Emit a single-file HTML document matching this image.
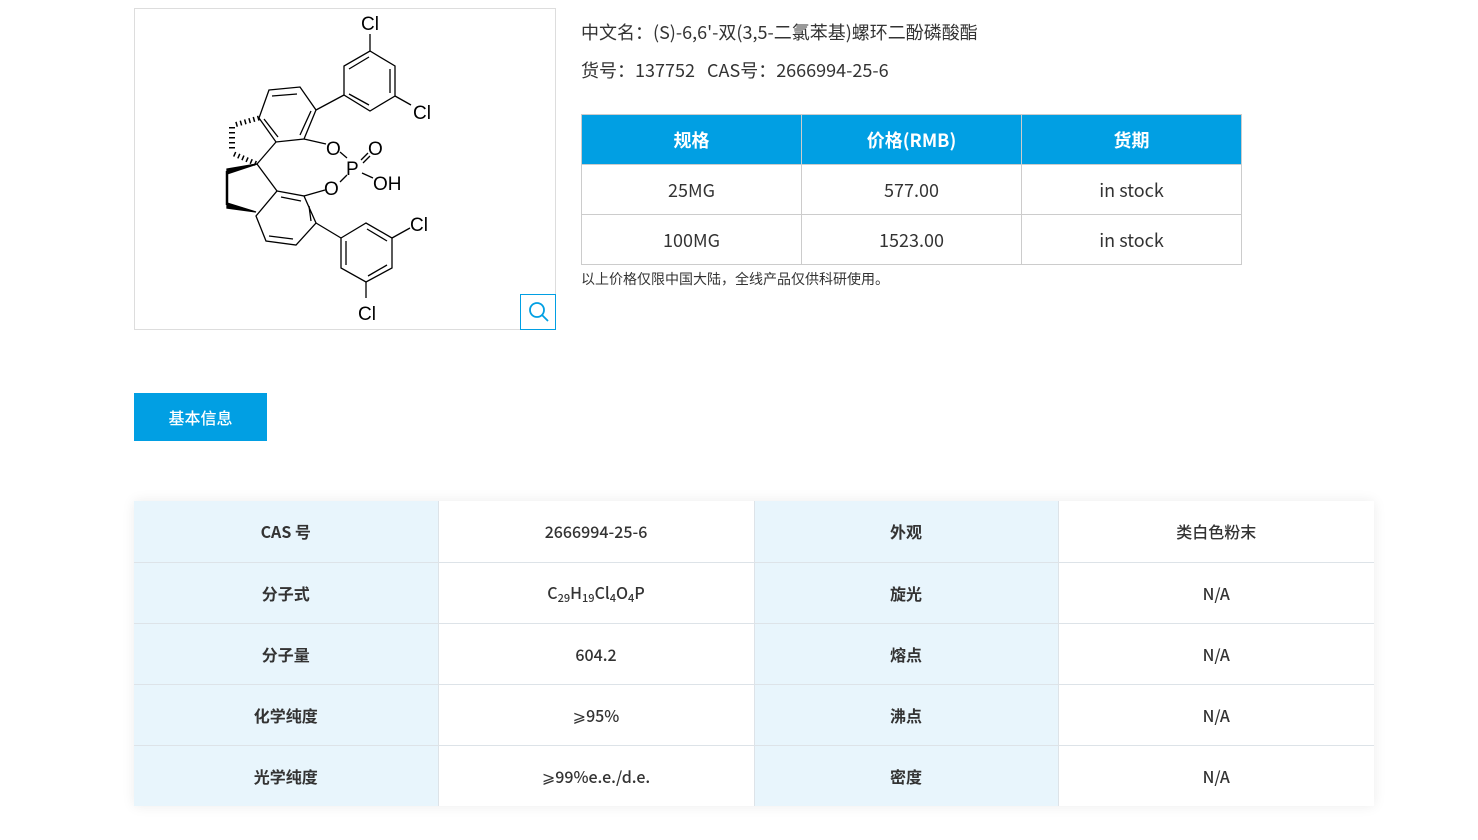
<!DOCTYPE html>
<html><head><meta charset="utf-8"><style>
*{margin:0;padding:0;box-sizing:border-box}
body{width:1478px;height:840px;background:#fff;font-family:"Noto Sans CJK SC","Liberation Sans",sans-serif;color:#333;position:relative;overflow:hidden}
.img{position:absolute;left:134px;top:8px;width:422px;height:322px;border:1px solid #ddd;overflow:hidden}
.zoom{position:absolute;left:520px;top:294px;width:36px;height:36px;border:1px solid #019fe3;background:#fff}
.t1{position:absolute;left:581px;top:19px;font-size:18px;color:#333}
.t2{position:absolute;left:581px;top:57px;font-size:18px;color:#333}
table.p{position:absolute;left:581px;top:114px;border-collapse:collapse;width:661px}
table.p td{border:1px solid #ccc;text-align:center;height:50px;font-size:18px;width:220px}
table.p tr.h td{background:#019fe3;color:#fff;font-weight:bold;border-color:#ccc}
.note{position:absolute;left:581px;top:269px;font-size:14px;color:#333}
.btn{position:absolute;left:134px;top:393px;width:133px;height:48px;background:#019fe3;color:#fff;font-size:16px;font-weight:500;line-height:48px;text-align:center}
table.b{position:absolute;left:134px;top:501px;border-collapse:collapse;box-shadow:0 0 12px rgba(0,0,0,.08)}
table.b td{height:61px;text-align:center;font-size:16px;font-weight:500;border-bottom:1px solid #dde3e8;border-right:1px solid #dde3e8;color:#333}
table.b tr:last-child td{border-bottom:none;height:61px}
table.b td.k{background:#e8f5fc;font-weight:bold}
sub{font-size:11px;vertical-align:-3px}
</style></head><body>
<div class="img">
<svg width="422" height="322" viewBox="134 8 422 322" style="position:absolute;left:-1px;top:-1px" fill="none" stroke="#000" stroke-width="1.3">
<polygon points="269,90 300,87 316,110 304,139 276,142 259,118"/>
<line x1="272" y1="96" x2="297" y2="94"/><line x1="300" y1="135" x2="311" y2="111"/><line x1="264" y1="119" x2="278" y2="137"/>
<line x1="316" y1="110" x2="344" y2="95"/>
<polygon points="344,95 344,66 370,51 395,66 395,96 370,111"/>
<line x1="349" y1="69" x2="369" y2="57"/><line x1="390" y1="69" x2="390" y2="93"/><line x1="349" y1="94" x2="369" y2="105"/>
<line x1="370" y1="51" x2="370" y2="34"/><line x1="395" y1="96" x2="411" y2="105"/>
<line x1="304" y1="139" x2="326" y2="144"/><line x1="340" y1="152" x2="347" y2="158"/>
<line x1="361" y1="160" x2="368" y2="153"/><line x1="363" y1="163" x2="370" y2="156"/>
<line x1="362" y1="173" x2="373" y2="178"/><line x1="347" y1="175" x2="340" y2="182"/>
<line x1="276" y1="142" x2="257" y2="164"/><line x1="257" y1="164" x2="277" y2="191"/>
<line x1="304" y1="196" x2="325" y2="190"/>
<polygon points="277,191 304,196 316,223 296,245 266,241 256,216"/>
<line x1="281" y1="197" x2="301" y2="201"/><line x1="309" y1="206" x2="311" y2="221"/><line x1="269" y1="236" x2="293" y2="239"/>
<line x1="316" y1="223" x2="341" y2="238"/>
<polygon points="341,238 366,223 392,238 392,268 366,282 341,268"/>
<line x1="346" y1="241" x2="346" y2="265"/><line x1="367" y1="229" x2="387" y2="241"/><line x1="368" y1="276" x2="387" y2="265"/>
<line x1="392" y1="238" x2="410" y2="228"/><line x1="366" y1="282" x2="366" y2="298"/>
<polygon points="257,164 227,169 227,174" fill="#000"/>
<line x1="227" y1="171" x2="227" y2="205" stroke-width="2.5"/>
<polygon points="227,203 256,212 227,208" fill="#000"/>
<line x1="259" y1="118" x2="234" y2="125" stroke-dasharray="1.5,3" stroke-width="5"/>
<line x1="232" y1="127" x2="232" y2="152" stroke-dasharray="1.5,3.5" stroke-width="6"/>
<line x1="234" y1="154" x2="257" y2="164" stroke-dasharray="1.5,3" stroke-width="5"/>
<g fill="#000" stroke="none" font-family="Liberation Sans,sans-serif" font-size="19">
<text x="361" y="30">Cl</text><text x="413" y="119">Cl</text>
<text x="326" y="155">O</text><text x="346" y="175">P</text><text x="368" y="155">O</text><text x="373" y="190">OH</text><text x="324" y="195">O</text>
<text x="410" y="231">Cl</text><text x="358" y="320">Cl</text>
</g>
</svg>
</div>
<div class="zoom"><svg width="36" height="36" viewBox="0 0 36 36" fill="none" stroke="#019fe3" stroke-width="1.8"><circle cx="16" cy="15" r="7"/><line x1="21" y1="20" x2="27" y2="26"/></svg></div>
<div class="t1">中文名：(S)-6,6'-双(3,5-二氯苯基)螺环二酚磷酸酯</div>
<div class="t2">货号：137752&nbsp;&nbsp;&nbsp;CAS号：2666994-25-6</div>
<table class="p">
<tr class="h"><td>规格</td><td>价格(RMB)</td><td>货期</td></tr>
<tr><td>25MG</td><td>577.00</td><td>in stock</td></tr>
<tr><td>100MG</td><td>1523.00</td><td>in stock</td></tr>
</table>
<div class="note">以上价格仅限中国大陆，全线产品仅供科研使用。</div>
<div class="btn">基本信息</div>
<table class="b">
<tr><td class="k" style="width:304px">CAS 号</td><td style="width:316px">2666994-25-6</td><td class="k" style="width:304px">外观</td><td style="width:316px;border-right:none">类白色粉末</td></tr>
<tr><td class="k">分子式</td><td>C<sub>29</sub>H<sub>19</sub>Cl<sub>4</sub>O<sub>4</sub>P</td><td class="k">旋光</td><td style="border-right:none">N/A</td></tr>
<tr><td class="k">分子量</td><td>604.2</td><td class="k">熔点</td><td style="border-right:none">N/A</td></tr>
<tr><td class="k">化学纯度</td><td>⩾95%</td><td class="k">沸点</td><td style="border-right:none">N/A</td></tr>
<tr><td class="k">光学纯度</td><td>⩾99%e.e./d.e.</td><td class="k">密度</td><td style="border-right:none">N/A</td></tr>
</table>
</body></html>
